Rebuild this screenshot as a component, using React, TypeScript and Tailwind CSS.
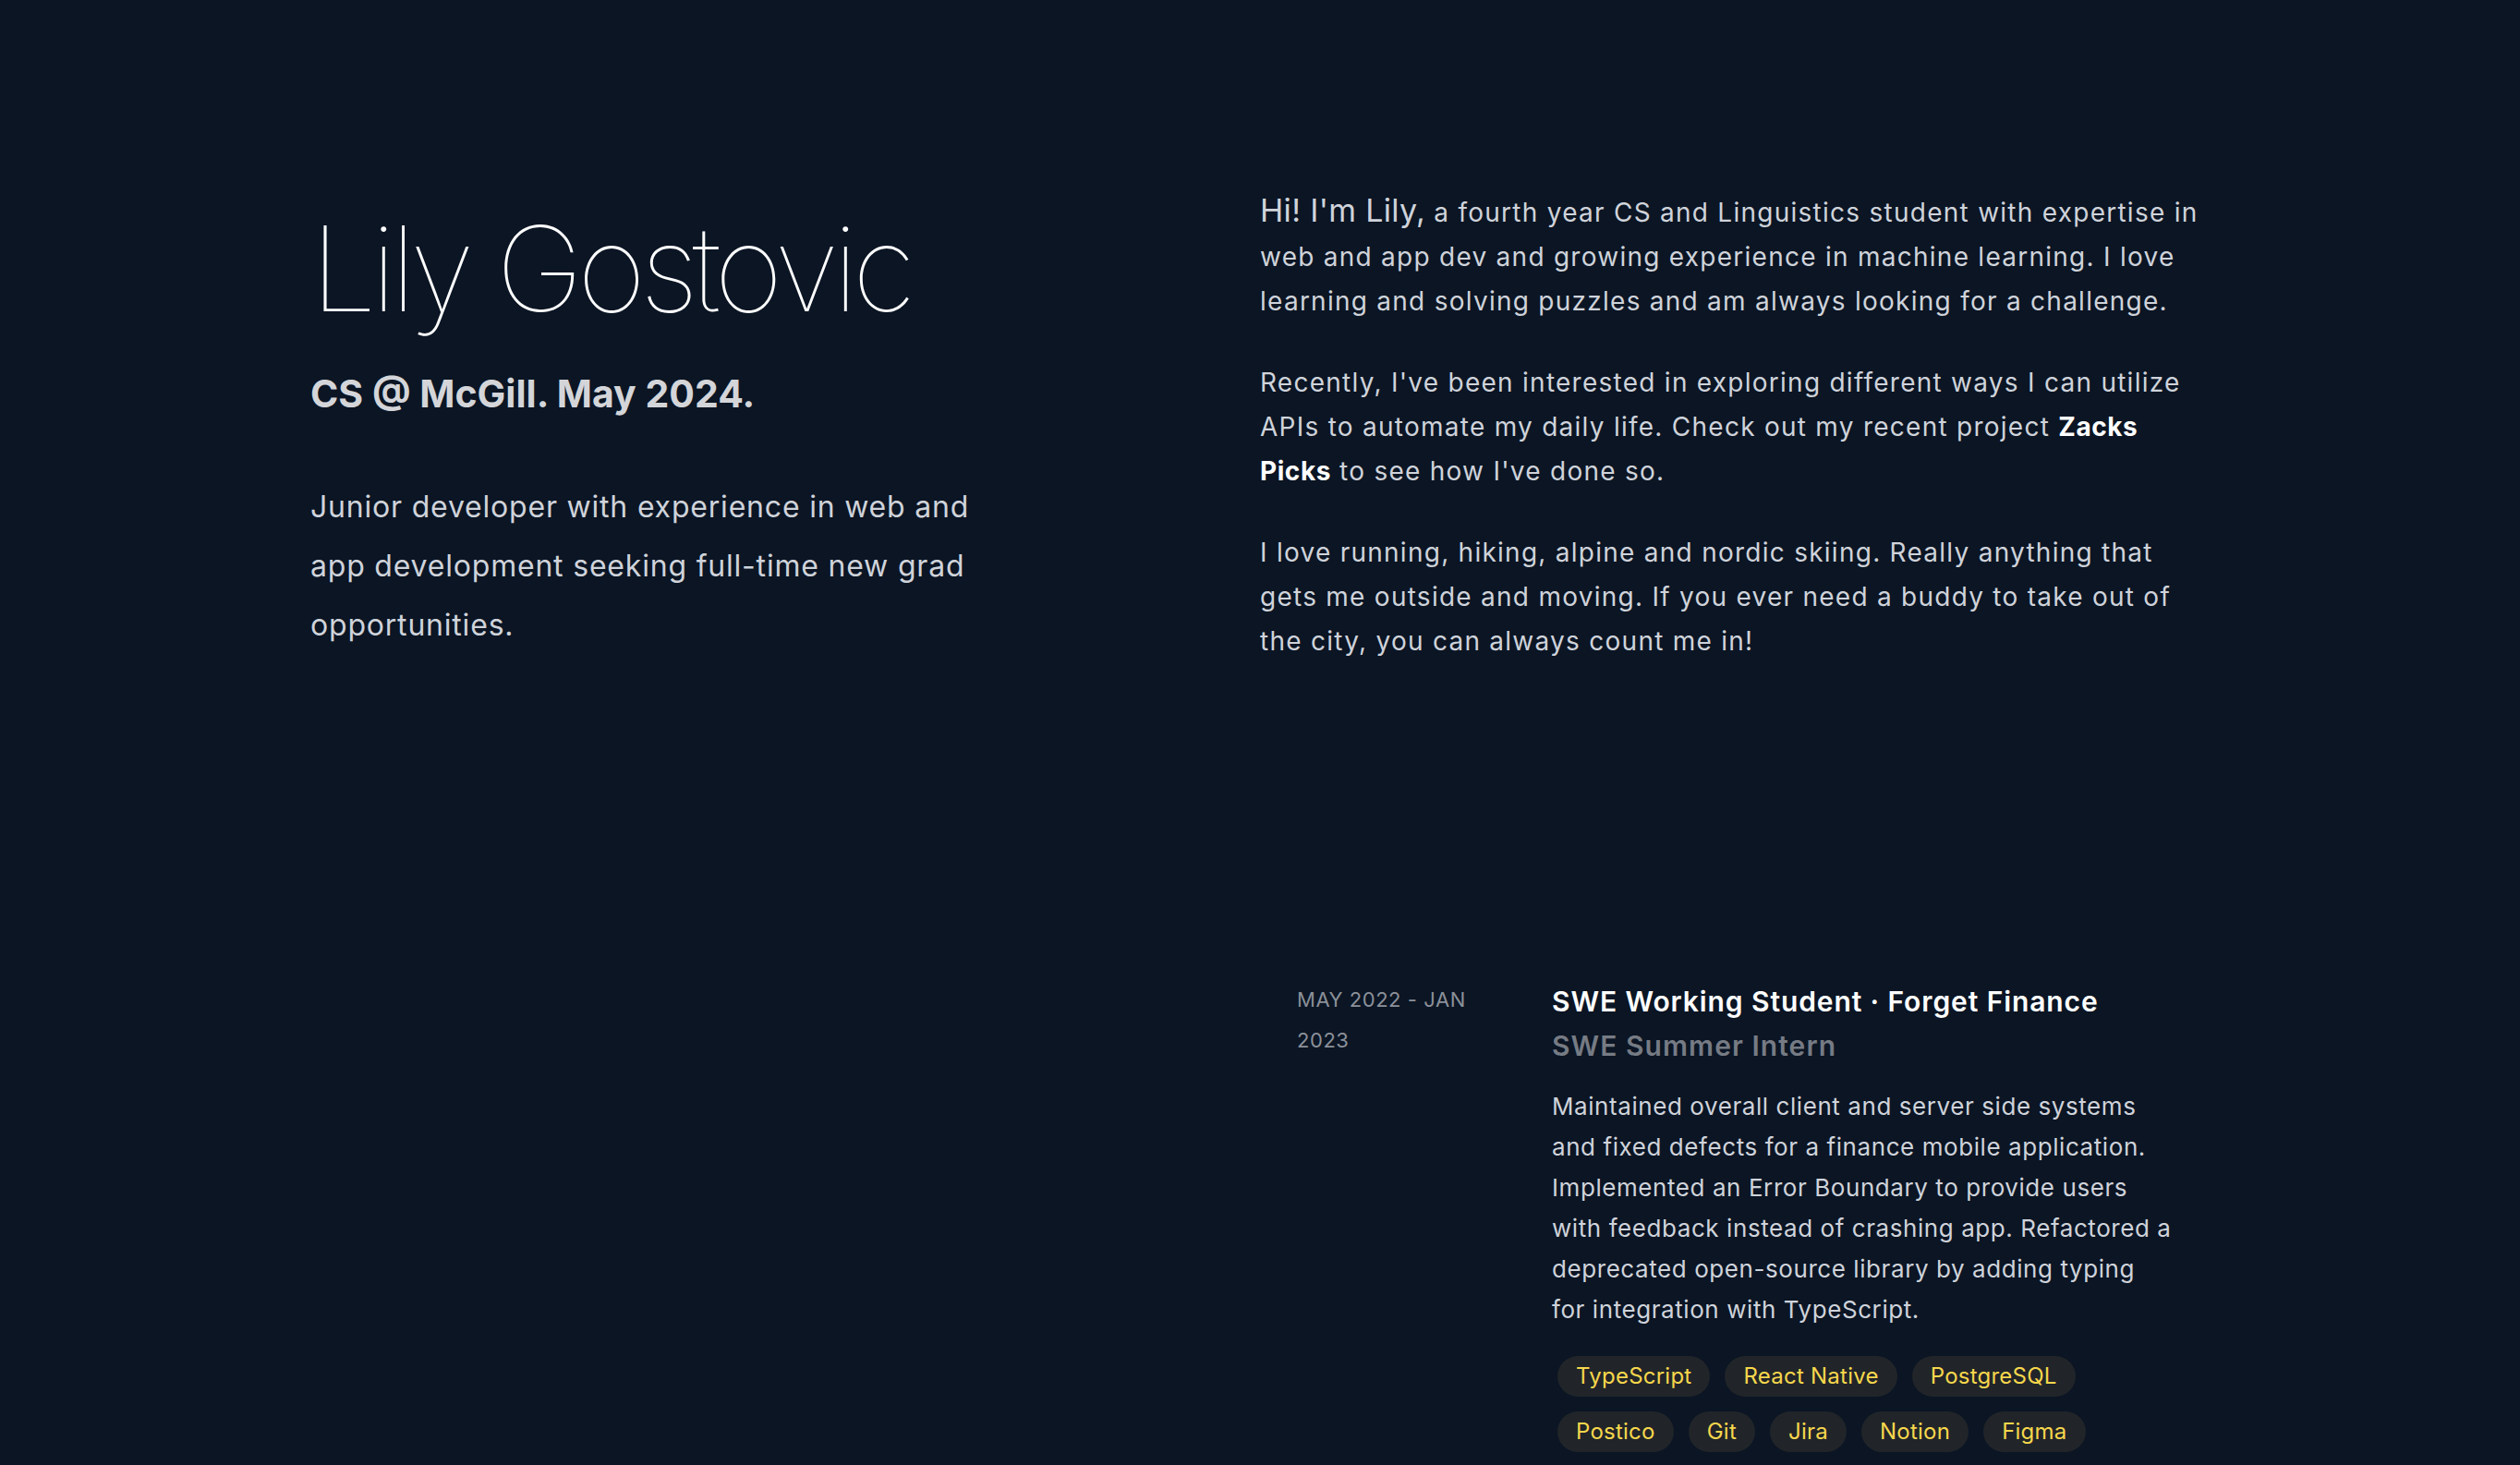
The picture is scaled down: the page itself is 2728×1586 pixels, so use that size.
const tags = ["TypeScript", "React Native", "PostgreSQL", "Postico", "Git", "Jira", "Notion", "Figma"]

function Experience() {
  return (
    <div className="flex pl-[40px] mt-[342px]">
      <div className="w-[220px] shrink-0 text-[22px] leading-[44px] uppercase tracking-wide text-[#8b9099]">
        May 2022 - Jan 2023
      </div>
      <div className="ml-[56px] w-[672px]">
        <h3 className="text-[30px] leading-[48px] font-semibold text-white tracking-[0.03em] whitespace-nowrap">
          SWE Working Student · Forget Finance
        </h3>
        <p className="text-[30px] leading-[48px] font-semibold text-[#767b84] tracking-[0.035em]">SWE Summer Intern</p>
        <p className="mt-[20px] text-[26px] leading-[44px] text-[#cfd3da] tracking-[0.022em]">
          Maintained overall client and server side systems and fixed defects for a finance mobile
          application. Implemented an Error Boundary to provide users with feedback instead of crashing
          app. Refactored a deprecated open-source library by adding typing for integration with
          TypeScript.
        </p>
        <ul className="mt-[28px] pl-[6px] flex flex-wrap gap-4">
          {tags.map((t) => (
            <li
              key={t}
              className="rounded-full bg-[#212529] px-[20px] py-[8px] text-[24px] leading-[28px] font-normal tracking-[0.01em] text-[#f7d74c]"
            >
              {t}
            </li>
          ))}
        </ul>
      </div>
    </div>
  )
}

export default function App() {
  return (
    <div
      className="min-h-screen bg-[#0b1524] text-[#cfd3da] antialiased"
      style={{ fontFamily: "Inter, 'Noto Sans', sans-serif" }}
    >
      <div className="mx-auto w-[2056px] flex pt-[204px] pb-[40px]">
        {/* left: name + tagline */}
        <header className="w-1/2 pt-[23px]">
          <h1 className="text-[128px] leading-none font-thin text-white tracking-[-0.05em]">Lily Gostovic</h1>
          <h2 className="mt-[47px] text-[41px] leading-[1.2] font-bold text-[#d4d5d9]">CS @ McGill. May 2024.</h2>
          <p className="mt-[66px] max-w-[740px] text-[32px] leading-[64px] text-[#cfd3da] tracking-[0.025em]">
            Junior developer with experience in web and app development seeking full-time new grad
            opportunities.
          </p>
        </header>

        {/* right: about + experience */}
        <main className="w-1/2">
          <section className="text-[28px] leading-[48px] tracking-[0.045em]">
            <p className="mb-10">
              <span className="text-[34px] tracking-[0.01em]">Hi! I'm Lily,</span> a fourth year CS and Linguistics
              student with expertise in web and app dev and growing experience in machine learning. I love
              learning and solving puzzles and am always looking for a challenge.
            </p>
            <p className="mb-10">
              Recently, I've been interested in exploring different ways I can utilize APIs to automate my
              daily life. Check out my recent project <span className="font-bold text-white tracking-[0.02em]">Zacks Picks</span>{" "}
              to see how I've done so.
            </p>
            <p>
              I love running, hiking, alpine and nordic skiing. Really anything that gets me outside and
              moving. If you ever need a buddy to take out of the city, you can always count me in!
            </p>
          </section>
          <Experience />
        </main>
      </div>
    </div>
  )
}
